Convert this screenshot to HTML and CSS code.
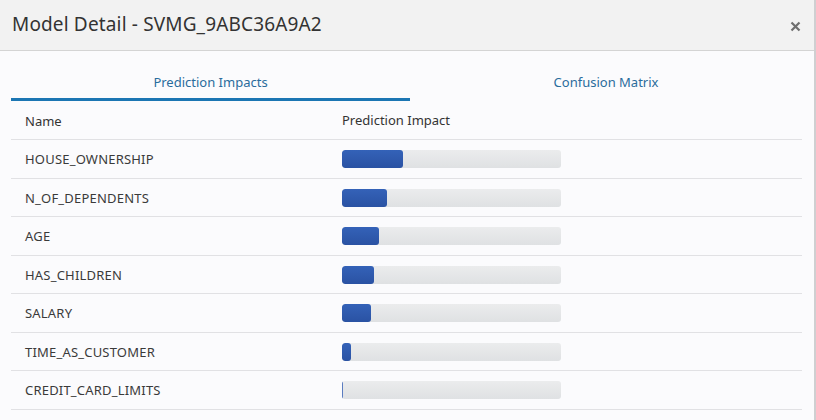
FILE: index.html
```html
<!DOCTYPE html>
<html>
<head>
<meta charset="utf-8">
<link rel="stylesheet" href="styles.css">
</head>
<body>
<div class="dialog">
  <div class="header">
    <div class="title">Model Detail - SVMG_9ABC36A9A2</div>
    <div class="close" aria-label="Close">
      <svg width="11" height="11" viewBox="0 0 11 11"><path d="M1.5 1.5 L9.5 9.5 M9.5 1.5 L1.5 9.5" stroke="#6f6f6f" stroke-width="2.2" stroke-linecap="butt"/></svg>
    </div>
  </div>
  <div class="content">
    <div class="tabs">
      <div class="tab active">Prediction Impacts</div>
      <div class="tab">Confusion Matrix</div>
    </div>
    <div class="table">
      <div class="row head"><div class="c1">Name</div><div class="c2">Prediction Impact</div></div>
      <div class="row"><div class="c1">HOUSE_OWNERSHIP</div><div class="c2"><div class="track"><div class="fill" style="width:61px"></div></div></div></div>
      <div class="row"><div class="c1">N_OF_DEPENDENTS</div><div class="c2"><div class="track"><div class="fill" style="width:45px"></div></div></div></div>
      <div class="row"><div class="c1">AGE</div><div class="c2"><div class="track"><div class="fill" style="width:37px"></div></div></div></div>
      <div class="row"><div class="c1">HAS_CHILDREN</div><div class="c2"><div class="track"><div class="fill" style="width:32px"></div></div></div></div>
      <div class="row"><div class="c1">SALARY</div><div class="c2"><div class="track"><div class="fill" style="width:29px"></div></div></div></div>
      <div class="row"><div class="c1">TIME_AS_CUSTOMER</div><div class="c2"><div class="track"><div class="fill" style="width:9px"></div></div></div></div>
      <div class="row"><div class="c1">CREDIT_CARD_LIMITS</div><div class="c2"><div class="track"><div class="fill thin" style="width:1px"></div></div></div></div>
    </div>
  </div>
</div>
</body>
</html>
```
FILE: styles.css
```css
html, body {
  margin: 0;
  padding: 0;
  background: #fbfbfd;
  overflow: hidden;
}
body {
  font-family: "Noto Sans", "Open Sans", sans-serif;
  color: #333;
}
.dialog {
  width: 814px;
  height: 420px;
  border-right: 2px solid #cfcfd1;
  background: #fbfbfd;
}
.header {
  height: 50px;
  background: #f2f2f2;
  border-bottom: 1px solid #d4d4d4;
  display: flex;
  align-items: center;
  justify-content: space-between;
  padding: 0 13px 0 12px;
}
.title {
  font-size: 19px;
  color: #333;
  letter-spacing: 0.15px;
  padding-bottom: 2px;
}
.close {
  display: flex;
  align-items: center;
  padding-top: 2px;
}
.content {
  padding: 10px 12px 0 11px;
}
.tabs {
  display: grid;
  grid-template-columns: 399px 1fr;
}
.tab {
  text-align: center;
  font-size: 13px;
  color: #2a6c9c;
  padding-top: 5px;
  line-height: 32px;
  border-bottom: 3px solid transparent;
}
.tab.active {
  border-bottom-color: #1b76b3;
}
.table {
  display: flex;
  flex-direction: column;
}
.row {
  display: grid;
  grid-template-columns: 331px 1fr;
  align-items: center;
  height: 37.5px;
  border-bottom: 1px solid #e1e1e4;
  font-size: 13px;
  color: #3a3a3a;
}
.row.head {
  height: 38px;
  color: #333;
}
.c1 {
  padding-left: 14px;
  padding-top: 1px;
  letter-spacing: 0.2px;
}
.head .c1, .head .c2 {
  letter-spacing: 0;
}
.track {
  width: 219px;
  height: 18px;
  margin-top: 1px;
  border-radius: 3px;
  background: linear-gradient(#ebeced, #dfe1e3);
  display: flex;
  overflow: hidden;
}
.fill {
  height: 100%;
  border-radius: 3px;
  background: linear-gradient(#3462b8, #2a52a3);
}
.fill.thin {
  border-radius: 0;
  background: #5a7cc0;
}
```
